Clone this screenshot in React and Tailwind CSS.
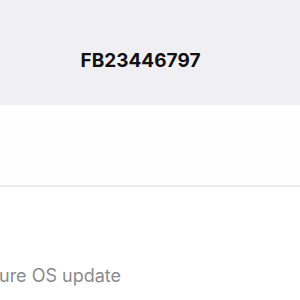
import React from 'react';

export default function App() {
  return (
    <div className="w-[300px] h-[300px] overflow-hidden bg-white font-['Inter','Liberation_Sans',sans-serif]">
      <div className="h-[105px] bg-[#f0eff4] flex items-center justify-center pt-[18px] pr-[19px]">
        <h1 className="text-[19px] font-bold text-[#111]">FB23446797</h1>
      </div>
      <div className="h-[80px] bg-[#fefefe]" />
      <div className="h-[2px] bg-[#ececec]" />
      <div className="pt-[75px] whitespace-nowrap">
        <p className="text-[18px] text-[#8a8a8e] -ml-[1px]">ure OS update</p>
      </div>
    </div>
  );
}
